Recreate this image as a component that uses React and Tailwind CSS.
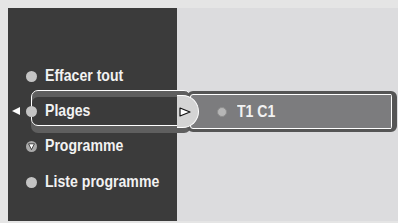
const font = { fontFamily: '"Liberation Sans", Arial, sans-serif' };

const labelClass = "origin-left scale-x-[0.88] whitespace-nowrap text-[16px] font-bold leading-none text-[#f2f2f2]";

const Dot = () => <span className="h-[11px] w-[11px] shrink-0 rounded-full bg-[#c4c4c4]" />;

const MenuRow = ({ label, icon, className = "" }) => (
  <div className={`flex h-[24px] items-center pl-[18px] ${className}`}>
    {icon || <Dot />}
    <span className={`ml-[8px] ${labelClass}`}>{label}</span>
  </div>
);

const App = () => {
  return (
    <div className="h-[223px] w-[398px] overflow-hidden bg-[#e5e5e5] pl-2 pt-2" style={font}>
      <div className="flex h-[213px] w-[390px] flex-col bg-[linear-gradient(to_right,#3b3b3b_169px,#dcdcde_169px)] pt-[56px]">
        <MenuRow label="Effacer tout" />

        {/* selected row */}
        <div className="relative mt-[2px] flex h-[42px] items-start">
          <svg className="ml-1 mt-[17px] shrink-0" width="8" height="8" viewBox="0 0 8 8">
            <polygon points="0,4 8,0 8,8" fill="#fff" />
          </svg>
          <span className="relative z-10 ml-[6px] mt-[16px] h-[11px] w-[11px] shrink-0 rounded-full bg-[#c4c4c4]" />
          <div className="ml-[-6px] flex h-[36px] w-[160px] shrink-0 items-center rounded-[7px] border border-white bg-[#3b3b3b] pl-[13px] pt-[6px] shadow-[inset_0_6px_0_#5f5f5f,0_7px_0_#5f5f5f]">
            <span className={labelClass}>Plages</span>
          </div>
          <div className="ml-[-4px] mr-[1px] mt-[1px] flex h-[41px] flex-1 items-center rounded-[6px] border-[3px] border-r-[5px] border-[#555] bg-[#7c7c7e] pl-[27px] shadow-[inset_0_0_0_1px_#fff]">
            <span className="h-[10px] w-[10px] shrink-0 rounded-full border border-[#8e8e8e] bg-[#b6b6b6]" />
            <span className={`ml-[10px] ${labelClass}`}>T1 C1</span>
          </div>
          <div className="absolute left-[169px] top-[5px] flex h-[33px] w-[22px] items-center rounded-r-full border border-l-0 border-white bg-[#d4d4d4] pl-[2px]">
            <svg width="12" height="10" viewBox="0 0 12 10">
              <polygon points="1,1 11,5 1,9" fill="#fff" stroke="#111" strokeWidth="1.2" strokeLinejoin="round" />
            </svg>
          </div>
        </div>

        <MenuRow
          label="Programme"
          className="mt-[2px]"
          icon={
            <svg className="shrink-0" width="11" height="11" viewBox="0 0 11 11">
              <circle cx="5.5" cy="5.5" r="5.5" fill="#a9a9a9" />
              <polygon points="2.6,2.8 8.4,2.8 5.5,8.6" fill="#fff" stroke="#222" strokeWidth="0.8" strokeLinejoin="round" />
            </svg>
          }
        />
        <MenuRow label="Liste programme" className="mt-[12px]" />
      </div>
    </div>
  );
};

export default App;
